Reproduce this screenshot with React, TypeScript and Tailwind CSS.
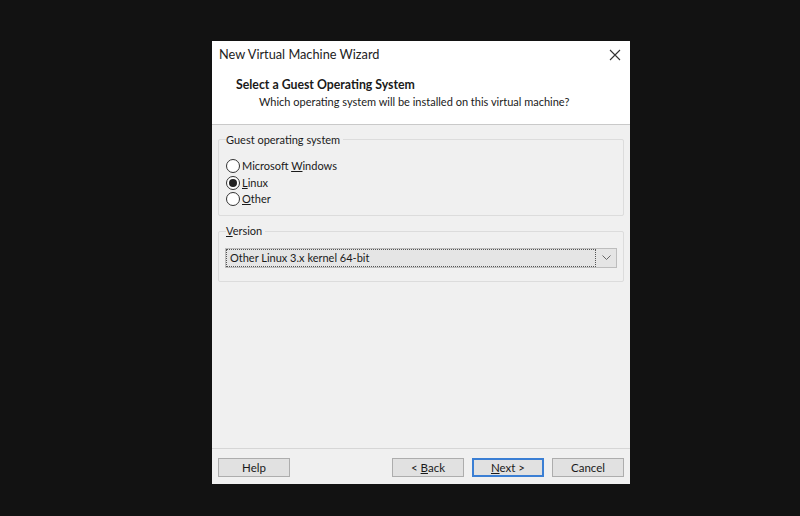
import React from "react";

const FONT = { fontFamily: 'Lato, "Noto Sans", sans-serif' };

function Radio({ checked, children }: { checked?: boolean; children: React.ReactNode }) {
  return (
    <div className="flex h-[16.5px] items-center gap-[2px]">
      <span className="flex h-[14px] w-[14px] items-center justify-center rounded-full border border-[#333] bg-white">
        {checked && <span className="h-[8px] w-[8px] rounded-full bg-[#222]" />}
      </span>
      <span>{children}</span>
    </div>
  );
}

function Btn({ children, focus }: { children: React.ReactNode; focus?: boolean }) {
  return (
    <div
      className={`flex h-[19px] w-[72px] items-center justify-center text-[11.5px] ${
        focus ? "border-2 border-[#3b7fd4] bg-[#e1e1e1]" : "border border-[#adadad] bg-[#e1e1e1]"
      }`}
    >
      <span>{children}</span>
    </div>
  );
}

export default function App() {
  return (
    <div className="min-h-[516px] w-[800px] bg-[#121212] pl-[212px] pt-[41px]" style={FONT}>
      <div className="flex h-[443px] w-[418px] flex-col bg-[#f0f0f0] text-[11px] text-[#1a1a1a]">
        {/* Title + header */}
        <div className="h-[84px] border-b border-[#c9c9c9] bg-white">
          <div className="flex h-[28px] items-center justify-between pl-[7px] pr-[9px]">
            <span className="text-[12.75px] text-[#222]">New Virtual Machine Wizard</span>
            <svg width="12" height="12" viewBox="0 0 12 12" className="text-[#333]">
              <path d="M1 1L11 11M11 1L1 11" stroke="currentColor" strokeWidth="1.1" />
            </svg>
          </div>
          <div className="pl-[24px] pt-[7px] text-[12.3px] font-bold leading-[17px]">Select a Guest Operating System</div>
          <div className="pl-[47px] leading-[17px]">Which operating system will be installed on this virtual machine?</div>
        </div>

        {/* Body */}
        <div className="flex flex-1 flex-col px-[6px] pt-[14px]">
          <div className="relative h-[77px] rounded-[2px] border border-[#dcdcdc] px-[7px] pt-[18px]">
            <span className="absolute left-[7px] top-[-8px] bg-[#f0f0f0] pr-[3px]">Guest operating system</span>
            <Radio>
              Microsoft <u>W</u>indows
            </Radio>
            <Radio checked>
              <u>L</u>inux
            </Radio>
            <Radio>
              <u>O</u>ther
            </Radio>
          </div>

          <div className="relative mt-[15px] h-[51px] rounded-[2px] border border-[#dcdcdc] px-[6px] pt-[16px]">
            <span className="absolute left-[7px] top-[-9px] bg-[#f0f0f0] pr-[3px]">
              <u>V</u>ersion
            </span>
            <div className="flex h-[20px] border border-[#bdbdbd] bg-[#e5e5e5]">
              <div className="flex flex-1 items-center border border-dotted border-[#555] pl-[3px]">
                Other Linux 3.x kernel 64-bit
              </div>
              <div className="flex w-[20px] items-center justify-center">
                <svg width="9" height="6" viewBox="0 0 9 6">
                  <path d="M0.5 0.5L4.5 4.5L8.5 0.5" stroke="#666" fill="none" strokeWidth="1" />
                </svg>
              </div>
            </div>
          </div>

          <div className="flex-1" />
        </div>

        {/* Footer */}
        <div className="h-[36px] border-t border-[#d6d6d6] px-[6px] pt-[9px]">
          <div className="flex items-center">
            <Btn>Help</Btn>
            <div className="flex-1" />
            <Btn>
              &lt; <u>B</u>ack
            </Btn>
            <div className="w-[8px]" />
            <Btn focus>
              <u>N</u>ext &gt;
            </Btn>
            <div className="w-[8px]" />
            <Btn>Cancel</Btn>
          </div>
        </div>
      </div>
    </div>
  );
}
